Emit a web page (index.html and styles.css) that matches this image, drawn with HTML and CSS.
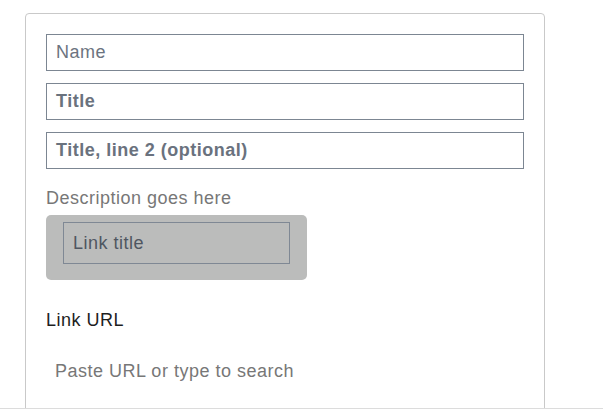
FILE: index.html
```html
<!DOCTYPE html>
<html>
<head>
<meta charset="utf-8">
<link rel="stylesheet" href="styles.css">
</head>
<body>
<div class="page">
  <div class="card">
    <div class="field">Name</div>
    <div class="field bold">Title</div>
    <div class="field bold">Title, line 2 (optional)</div>
    <div class="desc">Description goes here</div>
    <div class="linkbox">
      <div class="field inner">Link title</div>
    </div>
    <div class="label">Link URL</div>
    <div class="search">Paste URL or type to search</div>
  </div>
</div>
</body>
</html>
```
FILE: styles.css
```css
html, body {
  margin: 0;
  padding: 0;
  background: #fff;
}
body {
  font-family: "Liberation Sans", Arial, sans-serif;
  font-size: 18px;
  letter-spacing: 0.5px;
}
.page {
  height: 408px;
  border-bottom: 1px solid #dcdcdc;
  overflow: hidden;
}
.card {
  box-sizing: border-box;
  margin: 13px 0 0 25px;
  width: 520px;
  min-height: 440px;
  border: 1px solid #c9c9c9;
  border-radius: 4px;
  padding: 20px 20px;
}
.field {
  box-sizing: border-box;
  height: 37px;
  border: 1px solid #7c8692;
  padding: 0 9px;
  display: flex;
  align-items: center;
  color: #6c7480;
  margin-bottom: 12px;
}
.field.bold {
  font-weight: bold;
  color: #6a727e;
}
.desc {
  margin-top: 18px;
  line-height: 22px;
  color: #777;
}
.linkbox {
  box-sizing: border-box;
  margin-top: 6px;
  width: 261px;
  height: 65px;
  background: #bbbcbb;
  border-radius: 5px;
  padding: 7px 17px 16px 17px;
}
.field.inner {
  height: 42px;
  margin: 0;
  border-color: #7f8894;
  color: #4f5661;
}
.label {
  margin-top: 29px;
  line-height: 22px;
  color: #1e1e1e;
}
.search {
  margin-top: 29px;
  line-height: 22px;
  padding-left: 9px;
  color: #777;
}
```
